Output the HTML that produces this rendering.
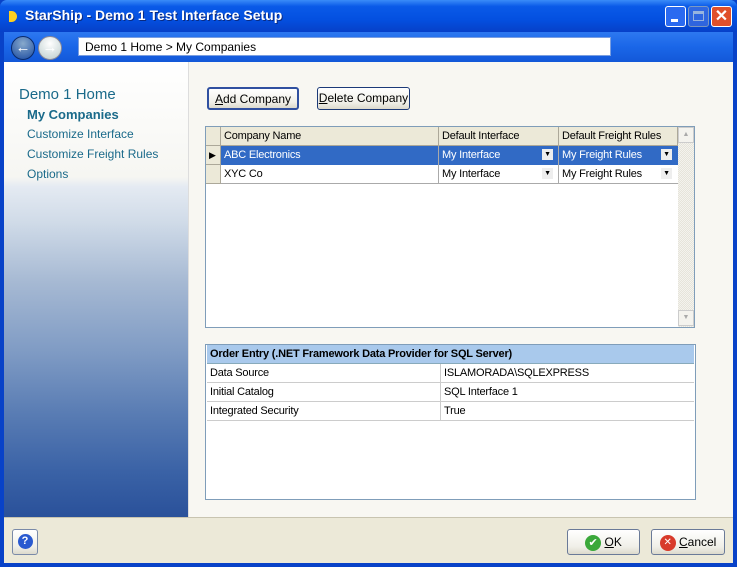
<!DOCTYPE html>
<html><head><style>
*{margin:0;padding:0;box-sizing:border-box}
body{width:737px;height:567px;overflow:hidden;font-family:Tahoma,"Liberation Sans",sans-serif;font-size:11px;background:#0842c8;position:relative}
.abs{position:absolute}
.title{left:0;top:0;width:737px;height:32px;background:linear-gradient(#3a8cf8,#0a5ae8 20%,#0450e0 60%,#0640c8);border-radius:7px 7px 0 0}
.title span{position:absolute;left:25px;top:7px;color:#fff;font-size:14px;font-weight:bold;font-family:"Liberation Sans",sans-serif;text-shadow:1px 1px #0a2a80}
.nav{left:4px;top:32px;width:729px;height:30px;background:linear-gradient(#2d78f0,#1a66e8 50%,#1358d8)}
.addr{left:78px;top:37px;width:533px;height:19px;background:#fff;border:1px solid #7a9ee0;font-size:12px;padding:2px 6px;font-family:"Liberation Sans",sans-serif}
.left{left:4px;top:62px;width:184px;height:455px;background:linear-gradient(#fff 0,#f6f6f2 115px,#e4eaf2 125px,#d0dbe8 160px,#a6b9d3 220px,#7f9bc4 290px,#5a7db4 350px,#3a62a6 410px,#2a519a 455px)}
.right{left:188px;top:62px;width:545px;height:455px;background:#f8f7f2;border-left:1px solid #ddd}
.bottom{left:4px;top:517px;width:729px;height:46px;background:#ece9d8;border-top:1px solid #c8c4b0}
.btn{border:1px solid #1c3a78;border-radius:3px;background:linear-gradient(#fff,#f0efe8 70%,#dcd9cc);font-size:12px;text-align:center;font-family:"Liberation Sans",sans-serif}
.grid{left:205px;top:126px;width:490px;height:202px;background:#fff;border:1px solid #7f9db9}
.cell{position:absolute;height:19px;line-height:18px;padding-left:3px;font-size:11px;letter-spacing:-0.2px;white-space:nowrap;overflow:hidden}
.hdr{background:#ece9d8;border-right:1px solid #aca899;border-bottom:1px solid #aca899}
.sel{background:#316ac5;color:#fff}
.dd{position:absolute;width:11px;height:11px;background:#eee;font-size:7px;line-height:11px;text-align:center;color:#000}
.det{left:205px;top:344px;width:491px;height:156px;background:#fff;border:1px solid #7f9db9}
.drow{position:absolute;left:1px;width:487px;height:19px;border-bottom:1px solid #ccc;font-size:11px;line-height:18px;letter-spacing:-0.2px}
.drow span{position:absolute;left:3px}
.drow b{position:absolute;left:233px;font-weight:normal;border-left:1px solid #ccc;padding-left:3px;height:18px}
.lnk{position:absolute;left:27px;color:#1a6a8a;font-size:12px;font-family:"Liberation Sans",sans-serif}
</style></head><body>
<div class="abs title"><span>StarShip - Demo 1 Test Interface Setup</span>
<div class="abs" style="left:9px;top:11px;width:8px;height:11px;border-radius:0 6px 6px 0;background:#ffd020"></div>
<div class="abs" style="left:665px;top:6px;width:21px;height:21px;border:1px solid #fff;border-radius:3px;background:#2a6af0"><div class="abs" style="left:5px;top:12px;width:7px;height:3px;background:#fff"></div></div>
<div class="abs" style="left:688px;top:6px;width:21px;height:21px;border:1px solid #9ab;border-radius:3px;background:#3a6ce0;opacity:.8"><div class="abs" style="left:4px;top:4px;width:11px;height:10px;border:1px solid #bcd;border-top-width:3px"></div></div>
<div class="abs" style="left:711px;top:6px;width:21px;height:21px;border:1px solid #fff;border-radius:3px;background:#e0502a;color:#fff;font-size:16px;font-weight:bold;text-align:center;line-height:19px">✕</div>
</div>
<div class="abs nav"></div>
<div class="abs" style="left:11px;top:36px;width:24px;height:24px;border-radius:50%;background:radial-gradient(circle at 50% 30%,#8ac,#1a4aa0);border:1px solid #0a2a6a;color:#fff;text-align:center;line-height:22px;font-weight:bold;font-size:15px">←</div>
<div class="abs" style="left:38px;top:36px;width:24px;height:24px;border-radius:50%;background:radial-gradient(circle at 50% 30%,#fff,#bcc);border:1px solid #889;color:#fff;text-align:center;line-height:22px;font-weight:bold;font-size:15px">→</div>
<div class="abs addr">Demo 1 Home &gt; My Companies</div>
<div class="abs left"></div>
<div class="abs right"></div>
<div class="abs" style="left:19px;top:86px;color:#1a6a8a;font-size:15px;font-family:'Liberation Sans',sans-serif">Demo 1 Home</div>
<div class="lnk" style="top:107px;font-weight:bold;font-size:13px">My Companies</div>
<div class="lnk" style="top:127px">Customize Interface</div>
<div class="lnk" style="top:147px">Customize Freight Rules</div>
<div class="lnk" style="top:167px">Options</div>
<div class="abs btn" style="left:207px;top:87px;width:92px;height:23px;line-height:21px;border:2px solid #3050a0"><u>A</u>dd Company</div>
<div class="abs btn" style="left:317px;top:87px;width:93px;height:23px;line-height:21px"><u>D</u>elete Company</div>
<div class="abs grid">
<div class="cell hdr" style="left:0;top:0;width:15px"></div>
<div class="cell hdr" style="left:15px;top:0;width:218px">Company Name</div>
<div class="cell hdr" style="left:233px;top:0;width:120px">Default Interface</div>
<div class="cell hdr" style="left:353px;top:0;width:119px">Default Freight Rules</div>
<div class="cell hdr" style="left:0;top:19px;width:15px;font-size:9px;padding-left:3px">▶</div>
<div class="cell sel" style="left:15px;top:19px;width:218px;border-right:1px solid #aaa">ABC Electronics</div>
<div class="cell sel" style="left:233px;top:19px;width:120px;border-right:1px solid #aaa">My Interface<div class="dd" style="left:103px;top:3px">▼</div></div>
<div class="cell sel" style="left:353px;top:19px;width:119px">My Freight Rules<div class="dd" style="left:102px;top:3px">▼</div></div>
<div class="cell hdr" style="left:0;top:38px;width:15px"></div>
<div class="cell" style="left:15px;top:38px;width:218px;border-right:1px solid #aaa;border-bottom:1px solid #aaa">XYC Co</div>
<div class="cell" style="left:233px;top:38px;width:120px;border-right:1px solid #aaa;border-bottom:1px solid #aaa">My Interface<div class="dd" style="left:103px;top:3px">▼</div></div>
<div class="cell" style="left:353px;top:38px;width:119px;border-bottom:1px solid #aaa">My Freight Rules<div class="dd" style="left:102px;top:3px">▼</div></div>
<div class="abs" style="left:472px;top:0;width:16px;height:200px;background:repeating-conic-gradient(#f4f3ee 0 25%,#e6e4da 0 50%) 0 0/2px 2px"><div style="height:16px;border:1px solid #ccc;background:#f4f3ee;font-size:7px;text-align:center;color:#aaa;line-height:14px">▲</div><div class="abs" style="top:183px;width:16px;height:16px;border:1px solid #ccc;background:#f4f3ee;font-size:7px;text-align:center;color:#aaa;line-height:14px">▼</div></div>
</div>
<div class="abs det">
<div class="drow" style="top:0;background:#a9c9ec;font-weight:bold;border-bottom:1px solid #8ab"><span>Order Entry (.NET Framework Data Provider for SQL Server)</span></div>
<div class="drow" style="top:19px"><span>Data Source</span><b>ISLAMORADA\SQLEXPRESS</b></div>
<div class="drow" style="top:38px"><span>Initial Catalog</span><b>SQL Interface 1</b></div>
<div class="drow" style="top:57px"><span>Integrated Security</span><b>True</b></div>
</div>
<div class="abs bottom"></div>
<div class="abs btn" style="left:12px;top:529px;width:26px;height:26px;border-color:#7a8aa8"><div style="margin:4px auto;width:15px;height:15px;border-radius:50%;background:#2a5ad0;color:#fff;font-size:11px;font-weight:bold;line-height:15px">?</div></div>
<div class="abs btn" style="left:567px;top:529px;width:73px;height:26px;line-height:24px;border-color:#6a7a98"><span style="display:inline-block;width:16px;height:16px;border-radius:50%;background:#3aa83a;color:#fff;font-size:11px;line-height:16px;vertical-align:middle">✔</span> <u>O</u>K</div>
<div class="abs btn" style="left:651px;top:529px;width:74px;height:26px;line-height:24px;border-color:#6a7a98"><span style="display:inline-block;width:16px;height:16px;border-radius:50%;background:#d83a2a;color:#fff;font-size:10px;line-height:16px;vertical-align:middle">✕</span> <u>C</u>ancel</div>
</body></html>
